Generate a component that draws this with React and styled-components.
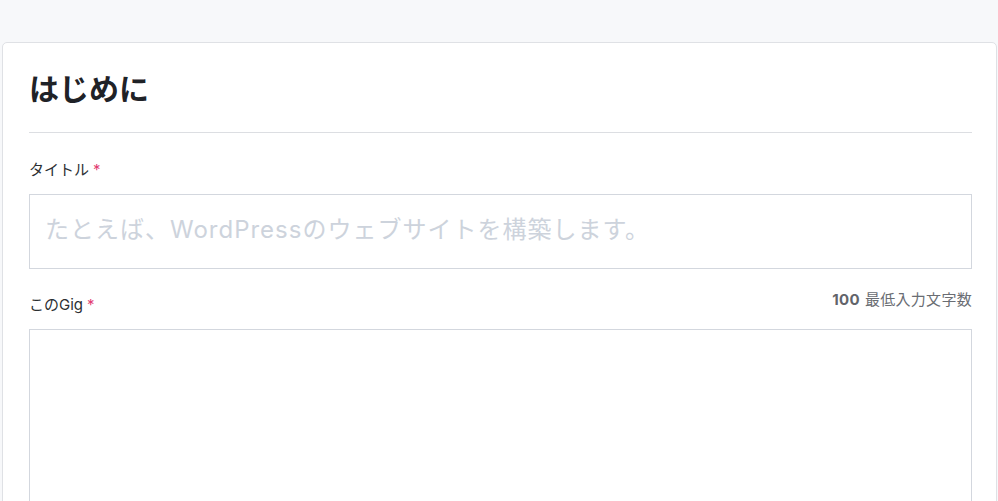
import React from "react";
import styled, { createGlobalStyle } from "styled-components";

const GlobalStyle = createGlobalStyle`
  html, body {
    margin: 0;
    padding: 0;
    background: #f7f8fa;
    overflow: hidden;
  }
  body {
    font-family: "Inter", "Noto Sans CJK JP", sans-serif;
  }
`;

const Page = styled.div`
  padding: 42px 1px 0 2px;
  height: 501px;
  box-sizing: border-box;
  overflow: hidden;
`;

const Card = styled.section`
  background: #fff;
  border: 1px solid #dfe1e5;
  border-radius: 5px;
  padding: 27px 24px 0 26px;
  min-height: 100%;
  box-sizing: border-box;
`;

const Heading = styled.h1`
  margin: 0;
  font-size: 30px;
  line-height: 39px;
  font-weight: 700;
  color: #1f2227;
  padding-bottom: 23px;
  border-bottom: 1px solid #dcdee2;
`;

const Field = styled.div`
  margin-top: ${(p) => p.$top}px;
`;

const LabelRow = styled.div`
  display: flex;
  justify-content: space-between;
  align-items: flex-start;
`;

const Label = styled.label`
  display: block;
  font-size: 15px;
  line-height: 20px;
  color: #2c2f33;
  margin-top: ${(p) => p.$shift || 0}px;
`;

const Required = styled.span`
  color: #e23c72;
  margin-left: 4px;
`;

const Counter = styled.div`
  font-size: 15px;
  line-height: 20px;
  color: #6a6d73;
  letter-spacing: 0.3px;

  b {
    font-weight: 700;
    color: #62646a;
    margin-right: 5px;
  }
`;

const TextInput = styled.input`
  display: block;
  width: 100%;
  box-sizing: border-box;
  height: 75px;
  margin-top: 14px;
  border: 1px solid #d3d7de;
  border-radius: 0;
  padding: 0 15px 4px;
  font-family: "Inter", "Noto Sans CJK JP", sans-serif;
  font-size: 24px;
  letter-spacing: 1px;
  color: #333;
  outline: none;

  &::placeholder {
    color: #cdd3dc;
  }
`;

const TextArea = styled.textarea`
  display: block;
  width: 100%;
  box-sizing: border-box;
  height: 180px;
  margin-top: 14px;
  border: 1px solid #d3d7de;
  resize: none;
  outline: none;
  font-family: "Inter", "Noto Sans CJK JP", sans-serif;
`;

export default function App() {
  return (
    <>
      <GlobalStyle />
      <Page>
        <Card>
          <Heading>はじめに</Heading>
          <Field $top={27}>
            <Label>
              タイトル<Required>*</Required>
            </Label>
            <TextInput placeholder="たとえば、WordPressのウェブサイトを構築します。" />
          </Field>
          <Field $top={21}>
            <LabelRow>
              <Label $shift={5}>
                このGig<Required>*</Required>
              </Label>
              <Counter>
                <b>100</b>最低入力文字数
              </Counter>
            </LabelRow>
            <TextArea />
          </Field>
        </Card>
      </Page>
    </>
  );
}
